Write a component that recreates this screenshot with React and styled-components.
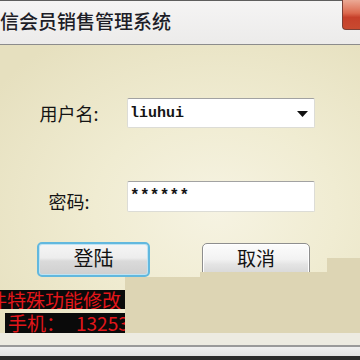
import React from "react";
import styled, { createGlobalStyle } from "styled-components";

const Global = createGlobalStyle`
  html, body { margin: 0; padding: 0; background: #fff; }
  body { width: 360px; height: 360px; overflow: hidden; }
`;

const Window = styled.div`
  width: 360px;
  height: 360px;
  display: flex;
  flex-direction: column;
  font-family: "Noto Sans CJK SC", "Noto Sans", sans-serif;
  overflow: hidden;
`;

const TitleBar = styled.div`
  flex: 0 0 45px;
  box-sizing: border-box;
  border-top: 1px solid #5e5e5e;
  border-bottom: 1px solid #8c8c8c;
  background: linear-gradient(#f5f4f4, #ecebea);
  display: flex;
  align-items: flex-start;
`;

const TitleText = styled.div`
  flex: 1;
  padding-top: 10px;
  font-size: 19px;
  line-height: 20px;
  font-weight: 500;
  color: #1d1d27;
  white-space: nowrap;
`;

const CloseButton = styled.div`
  width: 18px;
  height: 30px;
  box-sizing: border-box;
  margin-top: -1px;
  background: linear-gradient(#eba995, #dc6a4f 45%, #c6402a 60%, #c84a30);
  border-left: 1px solid #7a4036;
  border-bottom: 1px solid #7a4036;
  border-bottom-left-radius: 4px;
`;

const Body = styled.div`
  flex: 0 0 300px;
  display: flex;
  flex-direction: column;
  background: radial-gradient(ellipse 75% 70% at 60% 55%, #f6f3e2 0%, #f0ecd2 45%, #e6e0bf 100%);
`;

const FormGrid = styled.div`
  display: grid;
  grid-template-columns: 78px 188px;
  column-gap: 19px;
  row-gap: 53px;
  margin: 53px 0 0 30px;
  align-items: center;
`;

const Label = styled.div`
  text-align: center;
  font-size: 18px;
  line-height: 18px;
  color: #141414;
  padding-top: ${(p) => p.$shift || 0}px;
`;

const Field = styled.div`
  height: ${(p) => p.$h}px;
  box-sizing: border-box;
  background: #fff;
  border: 1px solid #dcdcd6;
  border-top-color: #a2a2a2;
  border-radius: 2px;
  display: flex;
  align-items: center;
  padding-left: 2px;
  font-family: "Liberation Mono", "DejaVu Sans Mono", monospace;
  font-size: ${(p) => p.$fs || 15}px;
  letter-spacing: ${(p) => p.$ls || 0}px;
  font-weight: bold;
  color: #151515;
  padding-bottom: ${(p) => p.$pb || 0}px;
`;

const Arrow = styled.svg`
  margin-left: auto;
  margin-right: 6px;
  margin-top: 1px;
`;

const ButtonRow = styled.div`
  display: flex;
  gap: 52px;
  margin: 30px 0 0 37px;
  height: 35px;
`;

const LoginButton = styled.div`
  width: 113px;
  height: 35px;
  box-sizing: border-box;
  border: 2px solid #62b8de;
  border-radius: 5px;
  box-shadow: inset 0 0 0 1px #bfe3f3;
  background: linear-gradient(#f5f5f5 0%, #ededed 45%, #dadada 55%, #cfcfcf 100%);
  display: flex;
  align-items: center;
  justify-content: center;
  padding-bottom: 4px;
  font-size: 20px;
  color: #121212;
`;

const CancelButton = styled.div`
  width: 108px;
  height: 36px;
  margin-top: 1px;
  box-sizing: border-box;
  border: 1px solid #8e8e8e;
  border-radius: 5px;
  box-shadow: inset 0 0 0 1px #ffffff;
  background: linear-gradient(#fcfcfc 0%, #f2f2f2 45%, #e4e4e4 60%, #d2d2d2 100%);
  display: flex;
  align-items: flex-start;
  justify-content: center;
  padding-top: 4px;
  font-size: 19px;
  line-height: 20px;
  color: #121212;
`;

const BottomRow = styled.div`
  display: flex;
  height: 56px;
`;

const LeftPanel = styled.div`
  width: 125px;
  display: flex;
  flex-direction: column;
  padding-top: 13px;
  gap: 4px;
`;

const Band = styled.div`
  height: ${(p) => p.$h}px;
  margin-left: ${(p) => p.$ml}px;
  background: #0a0a0a;
  overflow: hidden;
  white-space: nowrap;
  color: #e3161a;
  font-size: 19px;
  line-height: ${(p) => p.$h}px;
`;

const BandText = styled.span`
  display: inline-block;
  margin-left: ${(p) => p.$indent}px;
`;

const Digits = styled.span`
  margin-left: 11px;
`;

const RightPanel = styled.div`
  flex: 1;
  position: relative;
  background: #ddd5b4;
`;

const Notch = styled.div`
  position: absolute;
  bottom: 100%;
  left: ${(p) => p.$left}px;
  width: ${(p) => p.$w}px;
  height: ${(p) => p.$h}px;
  background: #ddd5b4;
`;

const Strip = styled.div`
  flex: 0 0 12px;
  background: #edebe1;
`;

const Frame = styled.div`
  flex: 0 0 15px;
  box-sizing: border-box;
  border-top: 2px solid #9a9a9a;
  border-bottom: 4px solid #2b2b2b;
  background: linear-gradient(#f0f0f0, #e2e2e2);
`;

export default function App() {
  return (
    <>
      <Global />
      <Window>
        <TitleBar>
          <TitleText>信会员销售管理系统</TitleText>
          <CloseButton />
        </TitleBar>
        <Body>
          <FormGrid>
            <Label>用户名:</Label>
            <Field $h={30}>
              liuhui
              <Arrow width="11" height="6" viewBox="0 0 11 6">
                <path d="M0 0 H11 L5.5 6 Z" fill="#111" />
              </Arrow>
            </Field>
            <Label $shift={8}>密码:</Label>
            <Field $h={31} $fs={16} $ls={0.3} $pb={1}>******</Field>
          </FormGrid>
          <ButtonRow>
            <LoginButton>登陆</LoginButton>
            <CancelButton>取消</CancelButton>
          </ButtonRow>
          <BottomRow>
            <LeftPanel>
              <Band $h={19} $ml={0}>
                <BandText $indent={-12}>件特殊功能修改</BandText>
              </Band>
              <Band $h={20} $ml={5}>
                <BandText $indent={3}>
                  手机：<Digits>132533</Digits>
                </BandText>
              </Band>
            </LeftPanel>
            <RightPanel>
              <Notch $left={75} $w={127} $h={5} />
              <Notch $left={202} $w={33} $h={19} />
            </RightPanel>
          </BottomRow>
          <Strip />
        </Body>
        <Frame />
      </Window>
    </>
  );
}
